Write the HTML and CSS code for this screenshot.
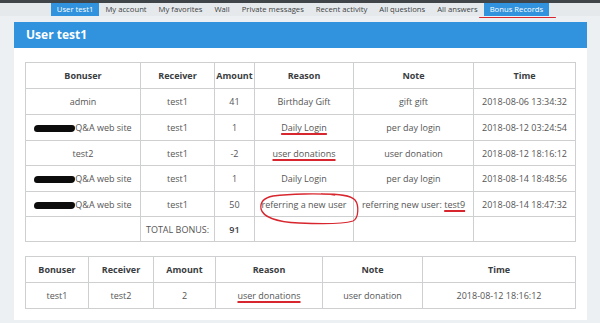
FILE: index.html
```html
<!DOCTYPE html>
<html lang="en">

<head>
    <meta charset="UTF-8">
    <meta name="viewport" content="width=device-width, initial-scale=1.0">
    <link rel="stylesheet" href="styles.css">
    <title>User test1 - Bonus Records</title>
</head>

<body>
    <div class="topbar"></div>
    <ul class="nav">
        <li class="active">User test1</li>
        <li>My account</li>
        <li>My favorites</li>
        <li>Wall</li>
        <li>Private messages</li>
        <li>Recent activity</li>
        <li>All questions</li>
        <li>All answers</li>
        <li class="active marked">Bonus Records</li>
    </ul>

    <div class="panel">
        <h1>User test1</h1>
        <div class="panelBody">
            <table class="records">
                <colgroup>
                    <col style="width:115px">
                    <col style="width:74px">
                    <col style="width:40px">
                    <col style="width:99px">
                    <col style="width:120px">
                    <col style="width:102px">
                </colgroup>
                <tr>
                    <th>Bonuser</th>
                    <th>Receiver</th>
                    <th>Amount</th>
                    <th>Reason</th>
                    <th>Note</th>
                    <th>Time</th>
                </tr>
                <tr>
                    <td>admin</td>
                    <td>test1</td>
                    <td>41</td>
                    <td>Birthday Gift</td>
                    <td>gift gift</td>
                    <td>2018-08-06 13:34:32</td>
                </tr>
                <tr>
                    <td><span class="blot"></span>Q&amp;A web site</td>
                    <td>test1</td>
                    <td>1</td>
                    <td><span class="mark">Daily Login</span></td>
                    <td>per day login</td>
                    <td>2018-08-12 03:24:54</td>
                </tr>
                <tr class="short">
                    <td>test2</td>
                    <td>test1</td>
                    <td>-2</td>
                    <td><span class="mark">user donations</span></td>
                    <td>user donation</td>
                    <td>2018-08-12 18:16:12</td>
                </tr>
                <tr>
                    <td><span class="blot"></span>Q&amp;A web site</td>
                    <td>test1</td>
                    <td>1</td>
                    <td>Daily Login</td>
                    <td>per day login</td>
                    <td>2018-08-14 18:48:56</td>
                </tr>
                <tr class="short">
                    <td><span class="blot"></span>Q&amp;A web site</td>
                    <td>test1</td>
                    <td>50</td>
                    <td class="circled">referring a new user
                        <svg class="loop" viewBox="0 0 100 32" width="100" height="32">
                            <path d="M76 2 C60 0 30 1 14 3 C4 5 1 10 2 16 C4 24 18 29 40 30 C60 31 84 31 94 28 C100 25 100 12 96 7 C92 2 80 1 62 1" />
                        </svg>
                    </td>
                    <td>referring new user: <span class="mark">test9</span></td>
                    <td>2018-08-14 18:47:32</td>
                </tr>
                <tr class="short">
                    <td></td>
                    <td class="total">TOTAL BONUS:</td>
                    <td class="sum">91</td>
                    <td></td>
                    <td></td>
                    <td></td>
                </tr>
            </table>

            <table class="records">
                <colgroup>
                    <col style="width:63px">
                    <col style="width:65px">
                    <col style="width:62px">
                    <col style="width:107px">
                    <col style="width:100px">
                    <col style="width:153px">
                </colgroup>
                <tr>
                    <th>Bonuser</th>
                    <th>Receiver</th>
                    <th>Amount</th>
                    <th>Reason</th>
                    <th>Note</th>
                    <th>Time</th>
                </tr>
                <tr>
                    <td>test1</td>
                    <td>test2</td>
                    <td>2</td>
                    <td><span class="mark">user donations</span></td>
                    <td>user donation</td>
                    <td>2018-08-12 18:16:12</td>
                </tr>
            </table>
        </div>
    </div>
</body>

</html>
```

FILE: styles.css
```css
body {
    margin: 0;
    background-color: #edf0f2;
    font-family: "Open Sans", "DejaVu Sans", sans-serif;
    color: #555;
}

.topbar {
    height: 3px;
    background-color: #40454a;
}

.nav {
    display: flex;
    justify-content: center;
    margin: 0;
    padding: 0;
    list-style: none;
    background-color: #e6e9eb;
    font-size: 7.7px;
    line-height: 13px;
}

.nav li {
    padding: 0 6px;
    color: #3b3f44;
}

.nav .active {
    background-color: #3193dd;
    color: #fff;
}

.nav .marked {
    position: relative;
}

.nav .marked::after {
    content: "";
    position: absolute;
    left: -5px;
    right: -7px;
    bottom: -2px;
    height: 1.5px;
    border-radius: 1px;
    background-color: #d8262e;
}

.panel {
    margin: 6px 13px 0 14px;
    background-color: #fff;
}

.panel h1 {
    margin: 0;
    padding-left: 12px;
    height: 26px;
    line-height: 26px;
    background-color: #3193dd;
    color: #fff;
    font-size: 12px;
    font-weight: 700;
}

.panelBody {
    display: flex;
    flex-direction: column;
    gap: 14px;
    padding: 14px 12px 11px 11px;
}

.records {
    width: 550px;
    border-collapse: collapse;
    table-layout: fixed;
    font-size: 9px;
    text-align: center;
}

.records th,
.records td {
    height: 25px;
    padding: 0;
    border: 1px solid #cdcfd1;
    white-space: nowrap;
}

.records tr.short td {
    height: 24px;
}

.records th {
    color: #3a3d41;
    font-weight: 700;
}

.blot {
    display: inline-block;
    width: 41px;
    height: 7px;
    border-radius: 4px 3px 4px 3px;
    background-color: #0c0c0c;
    vertical-align: -1px;
}

.mark {
    text-decoration: underline;
    text-decoration-color: #d8262e;
    text-decoration-thickness: 1.5px;
    text-underline-offset: 2px;
}

.circled {
    position: relative;
}

.loop {
    position: absolute;
    left: 4px;
    top: 1px;
    overflow: visible;
}

.loop path {
    fill: none;
    stroke: #d8262e;
    stroke-width: 1.3;
}

.total {
    text-transform: uppercase;
}

.sum {
    font-weight: 600;
    color: #3a3d41;
}
```
